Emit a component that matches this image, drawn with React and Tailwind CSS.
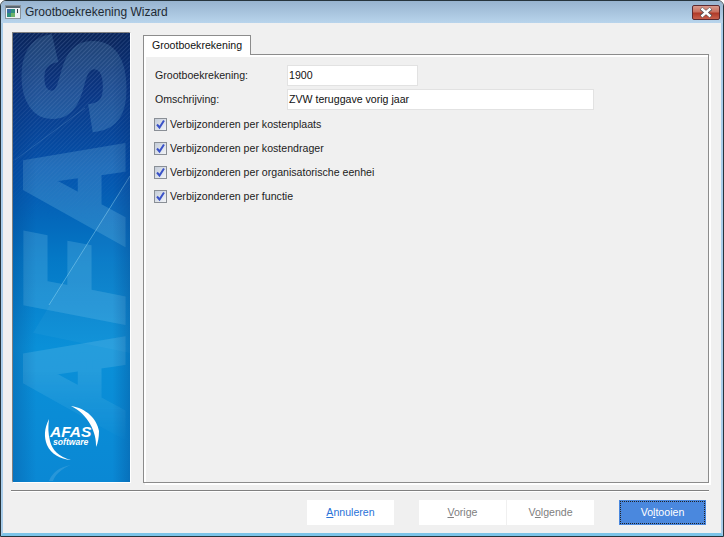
import React from 'react';

const uiFont = "font-['Liberation_Sans',sans-serif]";

const options = [
  'Verbijzonderen per kostenplaats',
  'Verbijzonderen per kostendrager',
  'Verbijzonderen per organisatorische eenhei',
  'Verbijzonderen per functie',
];

const WindowIcon = () => (
  <svg width="16" height="14" viewBox="0 0 16 14" className="shrink-0">
    <rect x="0.5" y="0.5" width="15" height="13" fill="#eef2f5" stroke="#8a949c" />
    <rect x="1" y="1" width="14" height="2" fill="#5a6670" />
    <rect x="2" y="4" width="8" height="8" fill="#2f8f7f" />
    <rect x="2" y="4" width="4" height="4" fill="#3a6ea5" />
    <rect x="6" y="8" width="4" height="4" fill="#6fb36a" />
    <rect x="12" y="4" width="1" height="4" fill="#333b44" />
  </svg>
);

const CloseButton = () => (
  <div className="flex h-[15px] w-[28px] items-center justify-center rounded-[2px] border border-[#5c2a30] bg-[linear-gradient(to_bottom,#d99a8c_0%,#c9705f_45%,#b03a28_55%,#c8604c_100%)]">
    <svg width="14" height="11" viewBox="0 0 14 11">
      <path d="M2 1.5 L12 9.5 M12 1.5 L2 9.5" stroke="#4a4f55" strokeWidth="3.6" />
      <path d="M2.5 1.5 L11.5 9.5 M11.5 1.5 L2.5 9.5" stroke="#ffffff" strokeWidth="2.4" />
    </svg>
  </div>
);

const Banner = () => (
  <svg width="117" height="449" viewBox="0 0 117 449" className="block">
    <defs>
      <linearGradient id="bannerBg" x1="0" y1="0" x2="0" y2="1">
        <stop offset="0" stopColor="#0a2458" />
        <stop offset="0.12" stopColor="#0a3480" />
        <stop offset="0.3" stopColor="#0452ac" />
        <stop offset="0.5" stopColor="#0478c6" />
        <stop offset="0.7" stopColor="#0a90d8" />
        <stop offset="1" stopColor="#0a88d4" />
      </linearGradient>
      <linearGradient id="bannerEdge" x1="0" y1="0" x2="1" y2="0">
        <stop offset="0" stopColor="#012a70" stopOpacity="0.22" />
        <stop offset="0.2" stopColor="#012a70" stopOpacity="0" />
        <stop offset="0.85" stopColor="#012a70" stopOpacity="0" />
        <stop offset="1" stopColor="#012a70" stopOpacity="0.25" />
      </linearGradient>
      <linearGradient id="stripeFade" x1="0" y1="0" x2="0" y2="1">
        <stop offset="0" stopColor="#fff" stopOpacity="1" />
        <stop offset="0.3" stopColor="#fff" stopOpacity="0.35" />
        <stop offset="0.42" stopColor="#fff" stopOpacity="0" />
      </linearGradient>
      <linearGradient id="letterFade" x1="0" y1="0" x2="0" y2="449" gradientUnits="userSpaceOnUse">
        <stop offset="0" stopColor="#fff" stopOpacity="0.16" />
        <stop offset="0.3" stopColor="#fff" stopOpacity="0.22" />
        <stop offset="0.75" stopColor="#fff" stopOpacity="0.2" />
        <stop offset="0.92" stopColor="#fff" stopOpacity="0" />
      </linearGradient>
      <mask id="letterMask" maskUnits="userSpaceOnUse" x="0" y="0" width="117" height="449">
        <rect width="117" height="449" fill="url(#letterFade)" />
      </mask>
      <pattern id="stripes" width="3" height="3" patternUnits="userSpaceOnUse" patternTransform="rotate(45)">
        <rect width="1" height="3" fill="#9fb8e8" fillOpacity="0.2" />
      </pattern>
      <mask id="stripeMask">
        <rect width="117" height="449" fill="url(#stripeFade)" />
      </mask>
    </defs>
    <rect width="117" height="449" fill="url(#bannerBg)" />
    <g mask="url(#letterMask)">
      <text
        transform="translate(108 397) rotate(-90)"
        fontFamily="Liberation Sans"
        fontWeight="700"
        fontStyle="italic"
        fontSize="136"
        textLength="392"
        fill="#8fd4f0"
        stroke="#8fd4f0"
        strokeWidth="9"
      >
        AFAS
      </text>
    </g>
    <rect width="117" height="449" fill="url(#stripes)" mask="url(#stripeMask)" />
    <polygon points="117,143 35,275 20,300 117,320" fill="#ffffff" fillOpacity="0.035" />
    <line x1="117" y1="143" x2="36" y2="272" stroke="#a8e4f8" strokeOpacity="0.55" strokeWidth="0.8" />
    <line x1="2" y1="127" x2="72" y2="75" stroke="#a8d0f0" strokeOpacity="0.22" strokeWidth="0.8" />
    <rect width="117" height="449" fill="url(#bannerEdge)" />
    {/* logo */}
    <g fill="#ffffff">
      <path d="M58 373 C73 375 84 386 86 398 C86 404 85 410 83 414 C84 400 75 381 58 373 Z" />
      <path d="M36 386 C31 396 31 404 34 412 C38 421 47 426 58 427 C46 424 39 417 37 408 C35 400 35 394 36 386 Z" />
      <text x="37" y="403.5" fontFamily="Liberation Sans" fontWeight="700" fontStyle="italic" fontSize="15.5">
        AFAS
      </text>
      <text x="40" y="412" fontFamily="Liberation Sans" fontWeight="700" fontStyle="italic" fontSize="8.6">
        software
      </text>
    </g>
    <path d="M36 448 C39 440 46 434 58 432 C48 436 42 442 40 448 Z" fill="#ffffff" fillOpacity="0.12" />
  </svg>
);

const CheckRow = ({ label }) => (
  <label className="-ml-[1px] flex h-[13px] items-center">
    <span className="flex h-[13px] w-[13px] shrink-0 items-center justify-center border border-[#8a8f96] bg-[linear-gradient(135deg,#c4ccd8,#f2f4f7)]">
      <svg width="11" height="11" viewBox="0 0 11 11">
        <path d="M2 5.5 L4.5 8.5 L9 1.5" fill="none" stroke="#3a52c8" strokeWidth="2" />
      </svg>
    </span>
    <span className="ml-[3px] text-[10.6px] leading-none whitespace-nowrap text-[#1c1c1c]">{label}</span>
  </label>
);

const TextField = ({ value, width }) => (
  <div className={`flex h-[21px] items-center border border-[#e2e2e2] bg-white pl-[1px] text-[10.6px] text-[#111] ${width}`}>
    {value}
  </div>
);

const WizardButton = ({ children, className }) => (
  <button className={`flex h-[25px] w-[87px] items-center justify-center text-[10.6px] ${className}`}>
    {children}
  </button>
);

export default function App() {
  return (
    <div className={`flex h-[537px] w-[724px] flex-col overflow-hidden rounded-t-[6px] border border-[#26343c] bg-[#f0f0f0] ${uiFont}`}>
      {/* title bar */}
      <div className="flex h-[22px] shrink-0 items-center bg-[linear-gradient(to_bottom,#97b3cf,#b8d4ec)] pr-[3px] pl-[4px]">
        <WindowIcon />
        <span className="ml-[4px] text-[12px] text-[#1e2a34]">Grootboekrekening Wizard</span>
        <div className="ml-auto">
          <CloseButton />
        </div>
      </div>

      <div className="flex min-h-0 flex-1 flex-col border-x-[2px] border-b-[3px] border-x-[#a9cdea] border-b-[#7cc4e8] pt-[9px]">
        <div className="flex pl-[9px]">
          {/* side banner */}
          <div className="h-[451px] w-[119px] shrink-0 border-t border-r-2 border-b-2 border-l border-[#808080] border-r-white border-b-white">
            <Banner />
          </div>

          {/* tab + panel */}
          <div className="ml-[12px] flex w-[568px] flex-col pt-[3px]">
            <div className="relative z-10 -mb-[1px] flex h-[20px] w-[108px] items-center justify-center border-x border-t border-[#8c8c8c] bg-white text-[10.6px] text-[#111]">
              Grootboekrekening
            </div>
            <div className="h-[429px] w-[566px] border border-[#8c8c8c] shadow-[2px_2px_0_#ffffff,inset_2px_2px_0_#ffffff]">
              <div className="pt-[10px] pl-[11px]">
                <div className="flex items-center">
                  <span className="w-[132px] text-[10.6px] text-[#1c1c1c]">Grootboekrekening:</span>
                  <TextField value="1900" width="w-[131px]" />
                </div>
                <div className="mt-[3px] flex items-center">
                  <span className="w-[132px] text-[10.6px] text-[#1c1c1c]">Omschrijving:</span>
                  <TextField value="ZVW teruggave vorig jaar" width="w-[307px]" />
                </div>
                <div className="mt-[8px] flex flex-col gap-[11px]">
                  {options.map((option) => (
                    <CheckRow key={option} label={option} />
                  ))}
                </div>
              </div>
            </div>
          </div>
        </div>

        {/* separator */}
        <div className="mt-[7px] ml-[8px] h-[2px] w-[698px] border-t border-[#808080] bg-white" />

        {/* buttons */}
        <div className="mt-[8px] flex pl-[304px]">
          <WizardButton className="bg-white text-[#2a72d8]">
            <span><u>A</u>nnuleren</span>
          </WizardButton>
          <WizardButton className="ml-[25px] bg-white text-[#808080]">
            <span><u>V</u>orige</span>
          </WizardButton>
          <WizardButton className="ml-[1px] bg-white text-[#808080]">
            <span>V<u>o</u>lgende</span>
          </WizardButton>
          <WizardButton className="ml-[25px] bg-[#4a88de] text-white outline-1 -outline-offset-2 outline-[#222] outline-dotted">
            <span>Vo<u>l</u>tooien</span>
          </WizardButton>
        </div>
      </div>
    </div>
  );
}
